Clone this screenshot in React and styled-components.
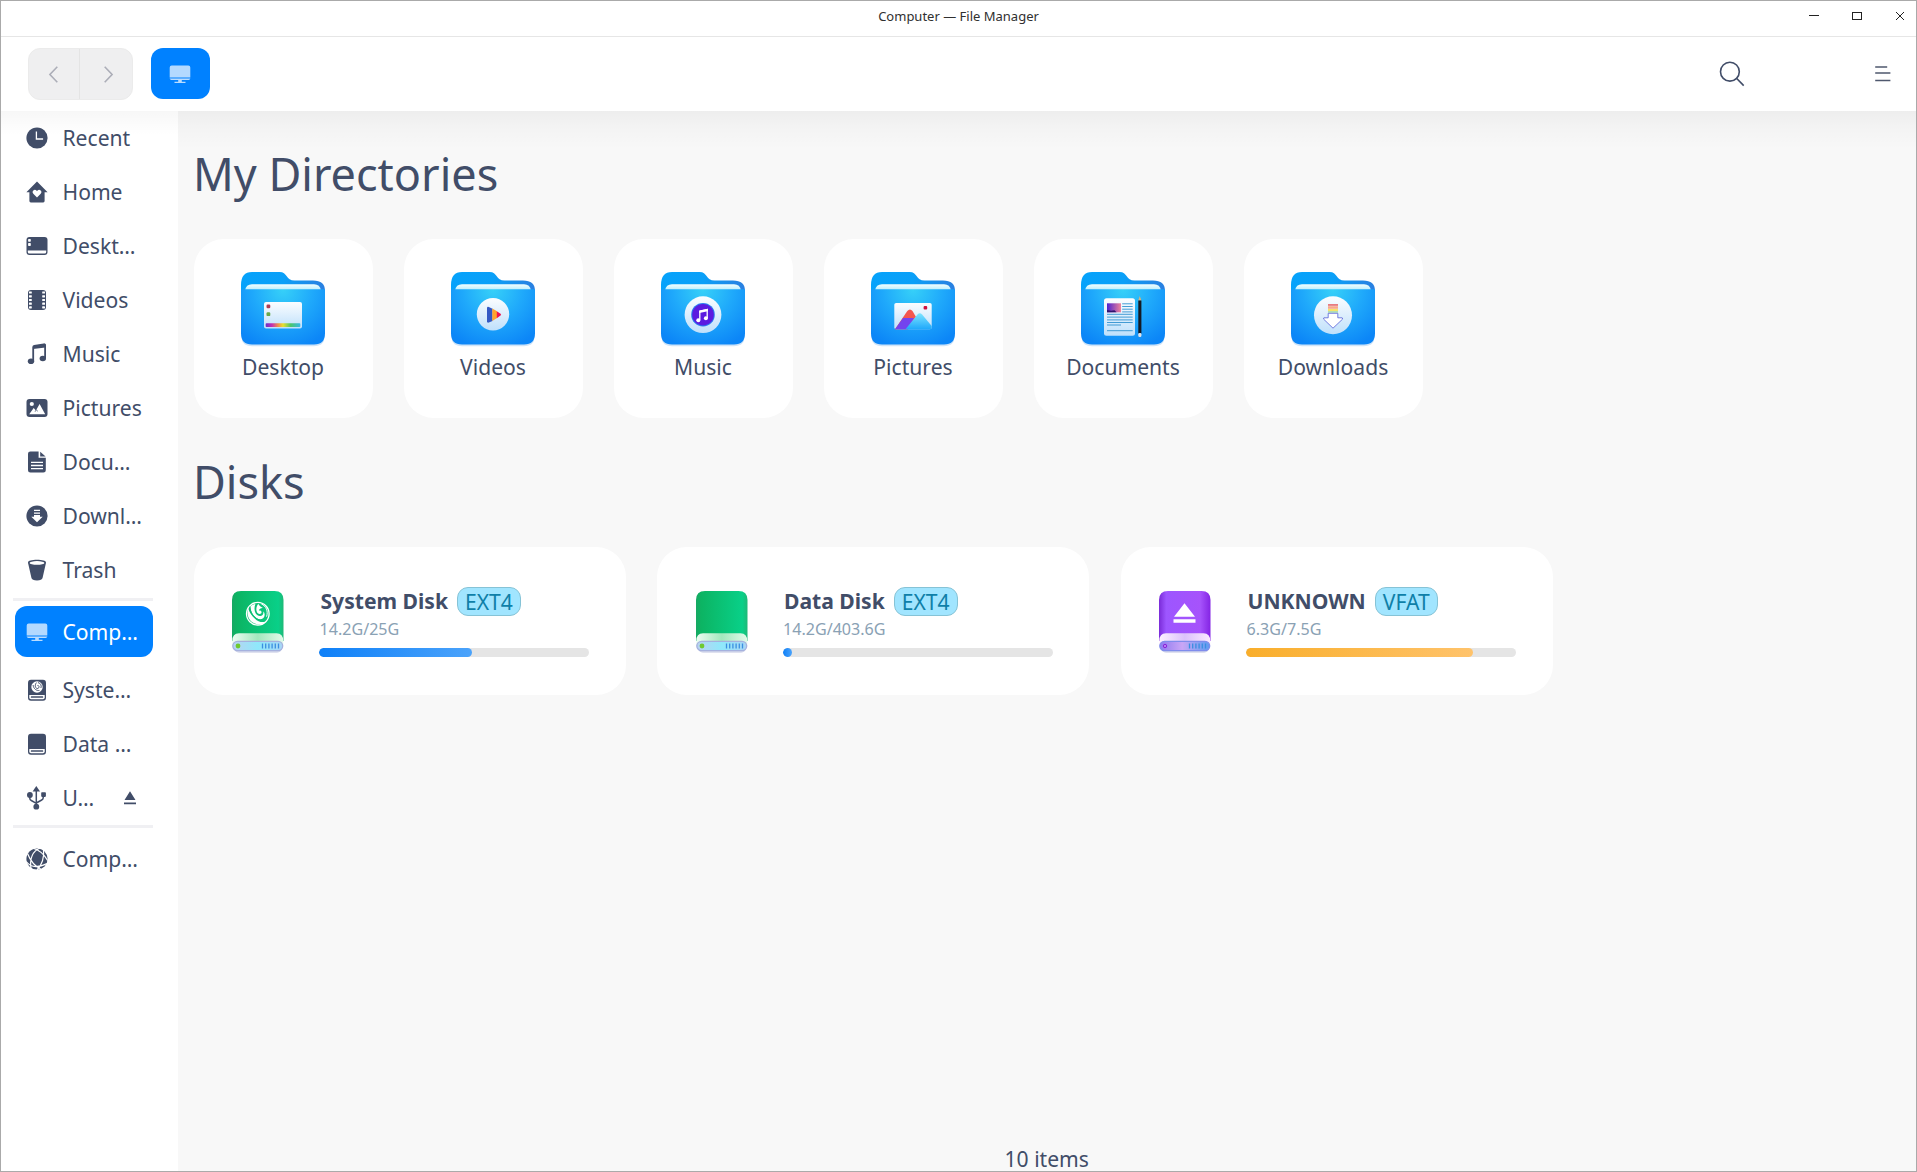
import React from "react";
import styled, { createGlobalStyle } from "styled-components";

const INK = "#414d68";
const BLUE = "#0081ff";

const GlobalStyle = createGlobalStyle`
  * { box-sizing: border-box; }
  html, body { margin: 0; padding: 0; background: #fff; }
  body {
    font-family: "Noto Sans", "Open Sans", sans-serif;
    font-size: 21.1px;
    color: ${INK};
  }
  svg { display: block; flex: none; overflow: visible; }
`;

const Window = styled.div`
  display: flex;
  flex-direction: column;
  width: 100%;
  height: 1172px;
  border: 1px solid #aaa;
  background: #fff;
  overflow: hidden;
`;

const TitleBar = styled.header`
  display: grid;
  grid-template-columns: 1fr auto 1fr;
  align-items: center;
  height: 36px;
  padding-bottom: 5px;
  border-bottom: 1px solid #e6e6e6;
`;

const WindowTitle = styled.h1`
  grid-column: 2;
  margin: 0;
  font-size: 13px;
  line-height: 18px;
  font-weight: 400;
  color: #303030;
`;

const WindowControls = styled.div`
  display: flex;
  justify-content: flex-end;
  gap: 31px;
  padding-right: 10px;
`;

const Toolbar = styled.nav`
  display: flex;
  align-items: center;
  height: 74px;
  padding: 0 25px 0 27px;
`;

const NavGroup = styled.div`
  display: flex;
  width: 105px;
  height: 52px;
  border-radius: 12px;
  border: 1px solid #ebebeb;
  background: #efeff0;
  overflow: hidden;
`;

const NavButton = styled.button`
  flex: 1;
  display: flex;
  align-items: center;
  justify-content: center;
  padding: 0 2px 0 0;
  border: 0;
  background: none;
  & + & { border-left: 1px solid #e4e4e4; padding: 0 0 0 4px; }
`;

const CrumbButton = styled.button`
  display: flex;
  align-items: center;
  justify-content: center;
  width: 59px;
  height: 51px;
  margin-left: 18px;
  margin-bottom: 1px;
  padding: 0 2px 0 0;
  border: 0;
  border-radius: 12px;
  background: ${BLUE};
`;

const ToolbarActions = styled.div`
  display: flex;
  align-items: center;
  gap: 129px;
  margin-left: auto;
`;

const Body = styled.div`
  display: flex;
  flex: 1;
  min-height: 0;
`;

const Sidebar = styled.aside`
  width: 177px;
  padding: 0 25px 0 12px;
  background: linear-gradient(rgba(0, 0, 0, 0.03), rgba(0, 0, 0, 0) 24px) #fff;
`;

const SideItem = styled.div`
  display: flex;
  align-items: center;
  height: ${(p) => (p.$active ? 51 : 54)}px;
  margin: ${(p) => (p.$active ? "5px 0 6px 2px" : "0 0 0 2px")};
  padding: 0 17px 0 11px;
  border-radius: 12px;
  gap: 14px;
  background: ${(p) => (p.$active ? BLUE : "transparent")};
  color: ${(p) => (p.$active ? "#fff" : INK)};
  white-space: nowrap;
`;

const SideLabel = styled.span`
  flex: 1;
  line-height: 30px;
  padding-left: 0.5px;
`;

const SideDivider = styled.div`
  height: 3px;
  margin: ${(p) => (p.$tight ? "1px 0 0" : "0 0 4px")};
  background: #f0f0f3;
`;

const Content = styled.main`
  flex: 1;
  display: flex;
  flex-direction: column;
  padding: 0 16px 0 15.5px;
  background: linear-gradient(rgba(0, 0, 0, 0.042), rgba(0, 0, 0, 0.018) 16px, rgba(0, 0, 0, 0) 38px) #f8f8f8;
`;

const SectionTitle = styled.h2`
  margin: ${(p) => p.$top}px 0 0 -0.5px;
  height: 64px;
  font-size: 45px;
  line-height: 64px;
  font-weight: 400;
`;

const Directories = styled.section`
  display: flex;
  gap: 31px;
  margin-top: 33px;
`;

const DirectoryCard = styled.div`
  display: flex;
  flex-direction: column;
  align-items: center;
  width: 179px;
  height: 179px;
  padding-top: 33px;
  border-radius: 30px;
  background: #fff;
`;

const DirectoryLabel = styled.span`
  margin-top: 7px;
  line-height: 30px;
`;

const Disks = styled.section`
  display: flex;
  gap: 31.5px;
  margin-top: 33px;
`;

const DiskCard = styled.div`
  display: flex;
  width: 432px;
  height: 148px;
  padding: 40px 36px 0 38.5px;
  border-radius: 30px;
  background: #fff;
`;

const DiskArt = styled.div`
  width: 87px;
  padding-top: 4px;
`;

const DiskInfo = styled.div`
  width: 270px;
`;

const DiskHeading = styled.div`
  display: flex;
  align-items: center;
  height: 29px;
  gap: 9px;
  padding-left: 1.5px;
`;

const DiskName = styled.span`
  font-weight: 700;
  line-height: 28px;
  padding-bottom: 2px;
`;

const FsBadge = styled.span`
  height: 29px;
  padding: 0 7px;
  border: 1px solid #86c3d6;
  border-radius: 11px;
  background: #a1e5ff;
  color: #0f7fa8;
  line-height: 27px;
`;

const DiskUsage = styled.div`
  height: 24px;
  margin-top: 1px;
  padding: 1px 0 0 0.5px;
  font-size: 16.1px;
  line-height: 23px;
  color: #8aa1b4;
`;

const Track = styled.div`
  height: 9px;
  margin-top: 7px;
  border-radius: 5px;
  background: #e5e5e5;
  overflow: hidden;
`;

const Fill = styled.div`
  height: 9px;
  min-width: 9px;
  border-radius: 5px;
  background: ${(p) => (p.$warn ? "linear-gradient(90deg, #f9ae2b, #ffc36b)" : "linear-gradient(90deg, #0e80f8, #4ba3fb)")};
`;

const StatusBar = styled.footer`
  margin-top: auto;
  height: 27px;
  line-height: 30px;
  text-align: center;
`;

/* ---------- Glyphs ---------- */

const Glyph = ({ children, size = 22 }) => (
  <svg width={size} height={size} viewBox="0 0 22 22" fill="currentColor">
    {children}
  </svg>
);

const MonitorIcon = () => (
  <Glyph>
    <path d="M.7 4.500a2 2 0 0 1 2-2h16.600a2 2 0 0 1 2 2V14.600H.7z" fill="#b3d9ff" />
    <path d="M.6 15.600h20.800a2 2 0 0 1-1.800 1.500h-6.800v1.600h3.700v1.300H5.500v-1.300h3.700v-1.600H2.400a2 2 0 0 1-1.800-1.500z" fill="#b9dcff" />
  </Glyph>
);

const RecentIcon = () => (
  <Glyph>
    <circle cx="11" cy="11" r="10.600" />
    <path d="M10.400 4.500V12h6.700" fill="none" stroke="#fff" strokeWidth="1.300" />
  </Glyph>
);

const HomeIcon = () => (
  <Glyph>
    <path d="M11 .6 .4 11.200h3V20a1.400 1.400 0 0 0 1.400 1.400h12.400a1.400 1.400 0 0 0 1.400-1.400v-8.800h3z" />
    <path d="M11 16.600 7.300 12.800a2.200 2.200 0 0 1 0-3.200 2.200 2.200 0 0 1 3.200 0l.5.6.5-.6a2.200 2.200 0 0 1 3.200 0 2.200 2.200 0 0 1 0 3.200z" fill="#fff" />
  </Glyph>
);

const DesktopIcon = () => (
  <Glyph>
    <rect x=".5" y="2" width="21" height="18" rx="3" />
    <rect x="2.100" y="4" width="2.700" height="2.800" rx=".7" fill="#fff" />
    <rect x="2.100" y="8.100" width="2.700" height="2.800" rx=".7" fill="#fff" />
    <path d="M1.800 15.600h18.400v1.300a1.700 1.700 0 0 1-1.700 1.700h-15a1.700 1.700 0 0 1-1.700-1.700z" fill="#fff" />
  </Glyph>
);

const VideoIcon = () => (
  <Glyph>
    <rect x="2" y="1" width="18" height="20" rx="3" />
    {[2.4, 6.2, 9.9, 13.6, 17.3].map((y) => (
      <React.Fragment key={y}>
        <rect x="3" y={y} width="2.800" height="2.200" rx=".4" fill="#fff" />
        <rect x="16.200" y={y} width="2.800" height="2.200" rx=".4" fill="#fff" />
      </React.Fragment>
    ))}
  </Glyph>
);

const MusicIcon = () => (
  <Glyph>
    <path d="M7.200 18.200V4.200q0-1 1-1.200l9.600-1.700q1.300-.2 1.300 1V15" fill="none" stroke="currentColor" strokeWidth="1.800" />
    <path d="M7 3.200 19.500 1v3.400L7 6z" />
    <ellipse cx="5" cy="18.300" rx="3.200" ry="2.800" />
    <ellipse cx="16.800" cy="15.500" rx="3.200" ry="2.800" />
  </Glyph>
);

const PictureIcon = () => (
  <Glyph>
    <rect x=".5" y="2" width="21" height="18" rx="3" />
    <circle cx="5.800" cy="7" r="2.100" fill="#fff" />
    <path d="M3.200 17.200 7.700 11l2.200 2.600L13.600 7l5.600 10.200z" fill="#fff" />
    <path d="m9 14.800 1.300-1.900 1.600 1.400" fill="none" stroke="currentColor" strokeWidth=".7" />
  </Glyph>
);

const DocumentIcon = () => (
  <Glyph>
    <path d="M4.400.4h8.200v6.400h7.200v12.400a2.400 2.400 0 0 1-2.400 2.400h-13A2.400 2.400 0 0 1 2 19.200V2.800A2.400 2.400 0 0 1 4.400.4z" />
    <path d="M14.200.7 19.600 5.600h-5.400z" />
    <path d="M5 11.400h12M5 14.500h12M5 17.600h12" stroke="#fff" strokeWidth="1.300" />
  </Glyph>
);

const DownloadIcon = () => (
  <Glyph>
    <circle cx="11" cy="11" r="10.600" />
    <path d="M8 4.700h6v1.400H8zM8 7.400h6v1.400H8zM8 10h6v1.800h2.700L11 17.300 5.300 11.800H8z" fill="#fff" />
  </Glyph>
);

const TrashIcon = () => (
  <Glyph>
    <path d="M2 3.400C2 1.700 6 .7 11 .7s9 1 9 2.700c0 .7-.2 1.400-.4 2.200l-3 13.200c-.4 1.800-2.400 2.600-5.600 2.600s-5.200-.8-5.600-2.600L2.400 5.600C2.200 4.800 2 4.100 2 3.400z" />
    <ellipse cx="11" cy="3.900" rx="7.400" ry="1.800" fill="#fff" />
  </Glyph>
);

const Swirl = ({ color, gap }) => (
  <g>
    <circle r="11.300" fill="none" stroke={color} strokeWidth="1.300" />
    <path d="M-9.600-5.500C-11.500 0-9.500 6.500-4 9.400 0 11.400 5 10.800 8 8 4 9 0 8-2.800 5-6 2-8.500-1-9.600-5.500z" fill={color} />
    <path d="M-7.200-7.500C-7.500-3-5 2-1 4.500 2.500 6.600 6.500 5 6.800 1.500 7 0 6.500-1.500 5.500-2.300 6 .5 4.500 2.500 2 2.300-2.500 2-4.600-4-2.400-9.800-4.200-9.500-6-8.700-7.200-7.500z" fill={color} />
    <path d="M.5-10C-2-7-2-2.500 0-.5 1.500 1 4 .2 3.800-1.700 3.600-3 2.200-3.600 1-3 1.500-5 3.500-6 5.500-5.500 3.500-7 1-8 .5-10z" fill={color} />
    <path d="M3.500-9.800C8.500-7.500 10.500-2.500 8.800 3" fill="none" stroke={color} strokeWidth="1" />
    <path d="M-8.300-7C-7.800-1.500-3.600 5.200 2.600 6.600" fill="none" stroke={gap} strokeWidth=".9" />
  </g>
);

const DiskSlot = () => (
  <>
    <path d="M3.300 16h15.400v2.600a1.700 1.700 0 0 1-1.700 1.700H5a1.700 1.700 0 0 1-1.700-1.700z" fill="#fff" />
    <rect x="4.800" y="17.300" width="12.400" height="1.500" rx=".6" />
  </>
);

const SystemDiskIcon = () => (
  <Glyph>
    <rect x="2" y=".7" width="18" height="21" rx="3" />
    <g transform="translate(11 8) scale(.49)">
      <circle r="11.600" fill="#fff" />
      <path d="M-8-4C-7 4-1 8 5 7M-1-9C-6-3-3 4 2 3 6 1 4-4 1-3M2-9c5 1 8 6 6 11" fill="none" stroke={INK} strokeWidth="1.900" />
    </g>
    <DiskSlot />
  </Glyph>
);

const DataDiskIcon = () => (
  <Glyph>
    <rect x="2" y=".7" width="18" height="21" rx="3" />
    <DiskSlot />
  </Glyph>
);

const UsbIcon = () => (
  <Glyph>
    <path d="M10.300 3v17M3.800 8v3.300q0 1.500 1.500 2.200l5 2.800M17.200 8v2.800q0 1.500-1.500 2.200l-5.400 3" fill="none" stroke="currentColor" strokeWidth="1.500" />
    <path d="M10.300-1 14 4.600H6.600z" />
    <circle cx="3.900" cy="8" r="2.900" />
    <rect x="15.200" y="5.300" width="4.700" height="4.600" rx=".8" />
    <circle cx="10.300" cy="19.700" r="2.900" />
  </Glyph>
);

const GlobeIcon = () => (
  <Glyph>
    <circle cx="11" cy="11" r="10.600" />
    <path
      d="M6.500 0C12 1.500 18 6 21.600 12.500M14 0C7 3 3.500 10 5 21M.2 13.500C5 20 13 19.500 21 15.500M17.500 2C18.500 9 16 17 11 22M1.500 5.500C4 12 9 18.500 15.500 21.500"
      fill="none"
      stroke="#fff"
      strokeWidth="1.200"
    />
  </Glyph>
);

const EjectIcon = () => (
  <svg width="12" height="14" viewBox="0 0 12 14" fill={INK}>
    <path d="M6 .3 11.500 9H.5zM0 11.500h12V13.300H0z" />
  </svg>
);

const Chevron = ({ d }) => (
  <svg width="9" height="17" viewBox="0 0 9 17" fill="none" stroke="#acaeb8" strokeWidth="1.600">
    <path d={d} />
  </svg>
);

/* ---------- Folder artwork ---------- */

const emblems = {
  Desktop: (
    <>
      <rect x="23" y="30" width="38" height="26.500" rx="2" fill="url(#paper)" />
      <rect x="25.500" y="32.500" width="3.800" height="3.800" rx="1.200" fill="#b23a52" />
      <rect x="25.500" y="40.300" width="3.800" height="3.800" rx="1.200" fill="#69a84a" />
      <rect x="24.700" y="51.200" width="34.600" height="3.800" rx=".8" fill="url(#rainbow)" />
    </>
  ),
  Videos: (
    <>
      <circle cx="42" cy="42.300" r="16.200" fill="url(#paper)" />
      <path d="M36 36.200q0-1.900 1.800-1.300l3.700 1.800v12.200l-3.700 1.700q-1.800.6-1.800-1.300z" fill="#3459c4" />
      <path d="M41.300 36.600 46 39.300v6.800l-4.700 2.800z" fill="#ffa42c" />
      <path d="m45.800 39.200 3.700 2.500q1.200.9 0 1.800l-3.700 2.700z" fill="#f0144f" />
    </>
  ),
  Music: (
    <>
      <circle cx="42" cy="42.700" r="18.400" fill="url(#paper)" />
      <circle cx="42" cy="42.700" r="11.800" fill="#2a7df0" />
      <circle cx="42" cy="42.700" r="10.800" fill="#5b1be0" />
      <path d="M38.800 48V39.200l7.400-1.700V46" fill="none" stroke="#fff" strokeWidth="1.300" />
      <path d="M38.300 38.600 46.800 36.800v2.500l-8.500 1.800z" fill="#fff" />
      <circle cx="37.300" cy="48.200" r="2" fill="#fff" />
      <circle cx="44.900" cy="46.200" r="2" fill="#fff" />
    </>
  ),
  Pictures: (
    <>
      <rect x="23.300" y="31" width="37.400" height="26.300" rx="1.800" fill="url(#paper)" />
      <rect x="52.600" y="34" width="3.600" height="3.600" rx="1" fill="#d0103f" />
      <path d="M24 57.300 36.300 39q2.700-3 5.200 0l3.500 6-8 12.300z" fill="#f4564f" />
      <path d="M24 57.300 32 46h11l-6 11.300z" fill="#7443ee" />
      <path d="M34.500 57.300 46.500 42.500q2.200-2.400 4.600 0l9.600 11.500v1.500q0 1.800-1.800 1.800z" fill="url(#hill)" />
    </>
  ),
  Documents: (
    <>
      <rect x="23" y="26.300" width="31" height="37.400" rx="2.500" fill="url(#paper)" />
      <rect x="26" y="31.300" width="14" height="9" fill="url(#photo)" />
      <path d="M26 40.300V38l4 .8 3.500-.6 2 2.100z" fill="#30156c" />
      <path d="M41.200 31.800h10.500M41.200 34.500h10.500M41.200 37.200h10.500M41.200 39.900h10.500M26 42.300h25.700M26 45.100h25.700M26 47.900h25.700M26 50.500h25.700M26 53h14M26 58.700h25.700" stroke="#3192cf" strokeWidth=".9" />
      <path d="m58.800 24 1.600 4.500h-3.200z" fill="#d8b27a" />
      <rect x="57.300" y="28.500" width="3.100" height="33" fill="#141a24" />
      <rect x="57.300" y="61" width="3.100" height="4" rx="1.200" fill="#dfe3ea" />
    </>
  ),
  Downloads: (
    <>
      <circle cx="42" cy="43.300" r="19" fill="url(#paper)" />
      <rect x="37" y="32.300" width="10" height="1.300" fill="#e5484a" />
      <rect x="37" y="34.200" width="10" height="2.600" fill="#f9a98a" />
      <rect x="37" y="37" width="10" height="2.100" fill="#f6e36b" />
      <rect x="37" y="39.100" width="10" height="1.600" fill="#a9dcb0" />
      <path d="M37.200 41.300h9.600v4.500h4.400L51.700 47 42 56.200 32.500 47l.4-1.200h4.300z" fill="#fff" stroke="#5560d8" strokeWidth=".8" />
    </>
  ),
};

const GradientDefs = styled.svg`
  position: absolute;
`;

const SharedGradients = () => (
  <GradientDefs width="0" height="0">
    <defs>
      <linearGradient id="folderBack" x1="0" y1="0" x2="1" y2="0">
        <stop offset="0" stopColor="#06a2fb" />
        <stop offset=".5" stopColor="#0aa0f8" />
        <stop offset="1" stopColor="#2b7fe0" />
      </linearGradient>
      <radialGradient id="folderFront" gradientUnits="userSpaceOnUse" cx="42" cy="18" r="60">
        <stop offset="0" stopColor="#36d0f8" />
        <stop offset=".5" stopColor="#1fa9fb" />
        <stop offset="1" stopColor="#0c86f7" />
      </radialGradient>
      <linearGradient id="sheet" x1="0" y1="0" x2="0" y2="1">
        <stop offset="0" stopColor="#f1fdff" />
        <stop offset="1" stopColor="#b5ecfc" />
      </linearGradient>
      <linearGradient id="paper" x1="0" y1="0" x2="0" y2="1">
        <stop offset="0" stopColor="#fbfdff" />
        <stop offset="1" stopColor="#bfe0fb" />
      </linearGradient>
      <linearGradient id="rainbow">
        <stop offset="0" stopColor="#6a2fc8" />
        <stop offset=".18" stopColor="#c42fb0" />
        <stop offset=".36" stopColor="#f0904a" />
        <stop offset=".5" stopColor="#e8e030" />
        <stop offset=".72" stopColor="#4cc66c" />
        <stop offset="1" stopColor="#35b8e8" />
      </linearGradient>
      <linearGradient id="hill" x1="0" y1="0" x2="0" y2="1">
        <stop offset="0" stopColor="#7de4ff" />
        <stop offset="1" stopColor="#1fa8fb" />
      </linearGradient>
      <linearGradient id="photo">
        <stop offset="0" stopColor="#4a22d0" />
        <stop offset="1" stopColor="#f0849a" />
      </linearGradient>
      <linearGradient id="greenCase">
        <stop offset="0" stopColor="#17a862" />
        <stop offset=".1" stopColor="#0cb463" />
        <stop offset=".9" stopColor="#09d088" />
        <stop offset="1" stopColor="#1fb877" />
      </linearGradient>
      <linearGradient id="purpleCase">
        <stop offset="0" stopColor="#7a2bd8" />
        <stop offset=".14" stopColor="#9d56ff" />
        <stop offset=".8" stopColor="#a653fb" />
        <stop offset="1" stopColor="#8424e4" />
      </linearGradient>
      <linearGradient id="greenLip">
        <stop offset="0" stopColor="#eefcf2" />
        <stop offset=".5" stopColor="#a3e8bd" />
        <stop offset="1" stopColor="#e2faea" />
      </linearGradient>
      <linearGradient id="purpleLip">
        <stop offset="0" stopColor="#fdf0ff" />
        <stop offset=".5" stopColor="#dcc2fb" />
        <stop offset="1" stopColor="#fbeaff" />
      </linearGradient>
      <linearGradient id="greenPanel">
        <stop offset="0" stopColor="#b9d3f0" />
        <stop offset=".5" stopColor="#8fe8fb" />
        <stop offset="1" stopColor="#a9d6f5" />
      </linearGradient>
      <linearGradient id="purplePanel">
        <stop offset="0" stopColor="#8f7af0" />
        <stop offset=".45" stopColor="#c9a6f6" />
        <stop offset="1" stopColor="#5d9cf0" />
      </linearGradient>
    </defs>
  </GradientDefs>
);

const FolderArt = ({ kind }) => (
  <svg width="84" height="73" viewBox="0 0 84 73">
    <rect x="1" y="62" width="82" height="12.200" rx="10" fill="#cfe4f8" />
    <path d="M0 13Q0 0 11 0H38.500C46.500 0 45 8.600 53.500 8.600H72Q84 8.600 84 19V40H0z" fill="url(#folderBack)" />
    <path d="M4 18.500Q5 12.300 11 12.300H73Q79 12.300 80 18.500z" fill="url(#sheet)" />
    <path d="M0 17.300H84V61.500Q84 72.500 73 72.500H11Q0 72.500 0 61.500z" fill="url(#folderFront)" />
    {emblems[kind]}
  </svg>
);

const DiskIllustration = ({ kind }) => {
  const purple = kind === "usb";
  return (
    <svg width="52" height="62" viewBox="0 0 52 62">
      <rect x="2" y="52" width="48" height="9.800" rx="5" fill="#d5d8ea" />
      <path d="M0 9Q0 0 9 0H42.500Q51.500 0 51.500 9V50H0z" fill={purple ? "url(#purpleCase)" : "url(#greenCase)"} />
      <path d="M.3 50Q.3 42.300 7 42.300H44.500Q51.200 42.300 51.200 50V55H.3z" fill={purple ? "url(#purpleLip)" : "url(#greenLip)"} />
      <rect x=".8" y="50.300" width="49.900" height="9.400" rx="4.700" fill={purple ? "url(#purplePanel)" : "url(#greenPanel)"} stroke={purple ? "#7f8cec" : "#a5b1de"} strokeWidth="1.300" />
      {purple ? (
        <circle cx="6" cy="55" r="1.700" fill="#b77cf2" stroke="#8a22d8" strokeWidth="1" />
      ) : (
        <circle cx="6" cy="55" r="2.400" fill="#6fc92f" />
      )}
      <path d="M30.500 52.500v5M33.700 52.500v5M36.900 52.500v5M40.100 52.500v5M43.300 52.500v5M46.500 52.500v5" stroke="#3a8fe0" strokeWidth="1.300" />
      {kind === "system" && (
        <g transform="translate(25.800 22.700)">
          <Swirl color="#fff" gap="#10c077" />
        </g>
      )}
      {purple && <path d="M25.500 12.300 36 25.700H15zM14.500 28.300h22v3.500h-22z" fill="#fff" />}
    </svg>
  );
};

/* ---------- Data ---------- */

const places = [
  ["Recent", RecentIcon],
  ["Home", HomeIcon],
  ["Deskt…", DesktopIcon],
  ["Videos", VideoIcon],
  ["Music", MusicIcon],
  ["Pictures", PictureIcon],
  ["Docu…", DocumentIcon],
  ["Downl…", DownloadIcon],
  ["Trash", TrashIcon],
];

const volumes = [
  { label: "Comp…", Icon: MonitorIcon, active: true },
  { label: "Syste…", Icon: SystemDiskIcon },
  { label: "Data …", Icon: DataDiskIcon },
  { label: "U…", Icon: UsbIcon, ejectable: true },
];

const disks = [
  { name: "System Disk", fs: "EXT4", usage: "14.2G/25G", percent: 56.8, kind: "system" },
  { name: "Data Disk", fs: "EXT4", usage: "14.2G/403.6G", percent: 3.3, kind: "data" },
  { name: "UNKNOWN", fs: "VFAT", usage: "6.3G/7.5G", percent: 83.9, kind: "usb", warn: true },
];

const SideEntry = ({ label, Icon, active, ejectable }) => (
  <SideItem $active={active}>
    <Icon />
    <SideLabel>{label}</SideLabel>
    {ejectable && <EjectIcon />}
  </SideItem>
);

export default function App() {
  return (
    <>
      <GlobalStyle />
      <SharedGradients />
      <Window>
        <TitleBar>
          <WindowTitle>Computer — File Manager</WindowTitle>
          <WindowControls>
            <svg width="12" height="12" viewBox="0 0 12 12" stroke="#222" fill="none">
              <path d="M1 5.500h10" />
            </svg>
            <svg width="12" height="12" viewBox="0 0 12 12" stroke="#222" fill="none">
              <rect x="1.500" y="2.500" width="9" height="7" />
            </svg>
            <svg width="12" height="12" viewBox="0 0 12 12" stroke="#222" fill="none">
              <path d="m2 2 8 8M10 2l-8 8" />
            </svg>
          </WindowControls>
        </TitleBar>
        <Toolbar>
          <NavGroup>
            <NavButton aria-label="Back"><Chevron d="M8.300.7.900 8.500l7.400 7.800" /></NavButton>
            <NavButton aria-label="Forward"><Chevron d="m.7.700 7.400 7.800-7.400 7.800" /></NavButton>
          </NavGroup>
          <CrumbButton aria-label="Computer"><MonitorIcon /></CrumbButton>
          <ToolbarActions>
            <svg width="26" height="26" viewBox="0 0 26 26" fill="none" stroke={INK} strokeWidth="1.600">
              <circle cx="9.900" cy="10.700" r="9.400" />
              <path d="m16.500 17.300 7.200 7.300" />
            </svg>
            <svg width="16" height="16" viewBox="0 0 16 16" fill="none" stroke="#4f586e" strokeWidth="1.300">
              <path d="M.2 1h12M.2 7h15.200M.2 14.500h15.200" />
            </svg>
          </ToolbarActions>
        </Toolbar>
        <Body>
          <Sidebar>
            {places.map(([label, Icon]) => (
              <SideEntry key={label} label={label} Icon={Icon} />
            ))}
            <SideDivider $tight />
            {volumes.map((v) => (
              <SideEntry key={v.label} {...v} />
            ))}
            <SideDivider />
            <SideEntry label="Comp…" Icon={GlobeIcon} />
          </Sidebar>
          <Content>
            <SectionTitle $top={31}>My Directories</SectionTitle>
            <Directories>
              {Object.keys(emblems).map((name) => (
                <DirectoryCard key={name}>
                  <FolderArt kind={name} />
                  <DirectoryLabel>{name}</DirectoryLabel>
                </DirectoryCard>
              ))}
            </Directories>
            <SectionTitle $top={32}>Disks</SectionTitle>
            <Disks>
              {disks.map((d) => (
                <DiskCard key={d.name}>
                  <DiskArt><DiskIllustration kind={d.kind} /></DiskArt>
                  <DiskInfo>
                    <DiskHeading>
                      <DiskName>{d.name}</DiskName>
                      <FsBadge>{d.fs}</FsBadge>
                    </DiskHeading>
                    <DiskUsage>{d.usage}</DiskUsage>
                    <Track>
                      <Fill $warn={d.warn} style={{ width: `${d.percent}%` }} />
                    </Track>
                  </DiskInfo>
                </DiskCard>
              ))}
            </Disks>
            <StatusBar>10 items</StatusBar>
          </Content>
        </Body>
      </Window>
    </>
  );
}
